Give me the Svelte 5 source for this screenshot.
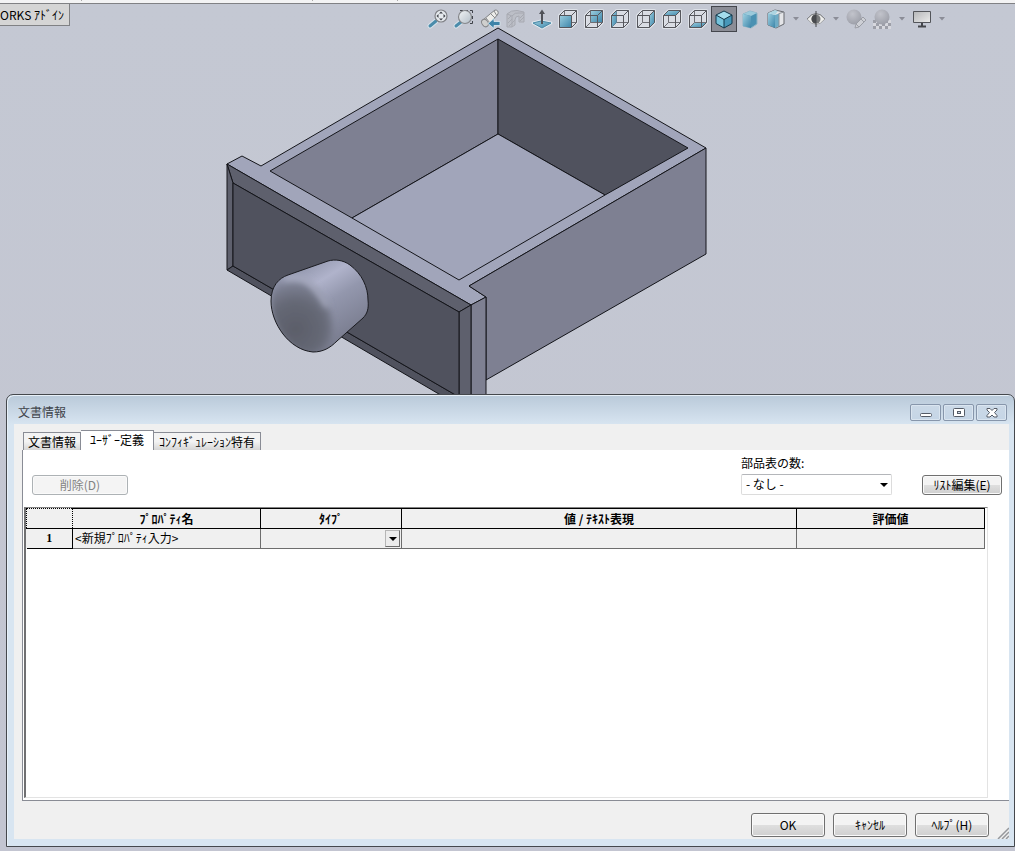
<script lang="ts">
  type Tool = { id: string; label: string; menu?: boolean; disabled?: boolean };

  const tools: Tool[] = [
    { id: 'fit', label: 'ウィンドウにフィット' },
    { id: 'area', label: '一部拡大' },
    { id: 'previous', label: '前の表示' },
    { id: 'section', label: '断面表示', disabled: true },
    { id: 'normal', label: '選択アイテムに垂直' },
    { id: 'front', label: '正面' },
    { id: 'back', label: '背面' },
    { id: 'left', label: '左側面' },
    { id: 'right', label: '右側面' },
    { id: 'top', label: '平面' },
    { id: 'bottom', label: '底面' },
    { id: 'iso', label: '等角投影' },
    { id: 'shaded', label: 'シェイディング' },
    { id: 'style', label: '表示スタイル', menu: true },
    { id: 'visibility', label: 'アイテムを表示/非表示', menu: true },
    { id: 'appearance', label: '外観編集', disabled: true },
    { id: 'scene', label: 'シーン適用', menu: true, disabled: true },
    { id: 'screen', label: '表示設定', menu: true }
  ];

  // filled face of each wireframe cube
  const faces: Record<string, string> = {
    front: '4.5,9.5 16.5,9.5 16.5,21.5 4.5,21.5',
    back: '9.5,4.5 21.5,4.5 21.5,16.5 9.5,16.5',
    left: '4.5,9.5 9.5,4.5 9.5,16.5 4.5,21.5',
    right: '16.5,9.5 21.5,4.5 21.5,16.5 16.5,21.5',
    top: '4.5,9.5 9.5,4.5 21.5,4.5 16.5,9.5',
    bottom: '4.5,21.5 9.5,16.5 21.5,16.5 16.5,21.5'
  };

  const tabs = ['文書情報', 'ﾕｰｻﾞｰ定義', 'ｺﾝﾌｨｷﾞｭﾚｰｼｮﾝ特有'];
  let activeTab = $state(1);
  let activeView = $state('iso');
</script>

<div class="app">
  <div class="ribbon-edge"><i></i><i></i><i></i></div>

  <main class="scene">
    <button class="addin-tab">ORKS ｱﾄﾞｲﾝ</button>

    <div class="toolbar" role="toolbar" aria-label="表示">
      {#each tools as tool}
        <button
          class="tool"
          class:active={activeView === tool.id}
          class:faded={tool.disabled}
          aria-label={tool.label}
          onclick={() => (activeView = tool.id)}
        >
          <svg width="26" height="26" viewBox="0 0 26 26" aria-hidden="true">
            {#if faces[tool.id]}
              <path d="M4.5 9.5l5-5h12v12l-5 5h-12z" fill="#d9dce3" stroke="#dde1e8" stroke-width="3" stroke-linejoin="round" />
              {#if tool.id !== 'back' && tool.id !== 'bottom'}
                <path d="M9.5 4.5v12h12M9.500 16.500l-5 5" fill="none" stroke="#6d6e74" />
              {/if}
              <polygon points={faces[tool.id]} fill="url(#blue)" />
              {#if tool.id === 'back' || tool.id === 'bottom'}
                <path d="M9.5 4.5v12h12M9.500 16.500l-5 5" fill="none" stroke="#6d6e74" />
              {/if}
              <path d="M4.5 9.5h12v12h-12zM4.500 9.500l5-5h12v12l-5 5M16.500 9.500l5-5" fill="none" stroke="#55565c" />
            {:else if tool.id === 'fit'}
              <path d="M11 15l-6 5" stroke="#d9e4ec" stroke-width="5" stroke-linecap="round" />
              <path d="M11 15l-6 5" stroke="#4b8cab" stroke-width="3" stroke-linecap="round" />
              <circle cx="16" cy="10" r="6" fill="#e6eaee" stroke="#808287" stroke-width="1.2" />
              <path d="M16 5.5l2 2h-4zM16 14.5l2-2h-4zM11.500 10l2-2v4zM20.500 10l-2-2v4z" fill="#3e4148" />
            {:else if tool.id === 'area'}
              <path d="M9 4.500h3M14 4.500h3M19 4.500h2.500V7M21.500 10v3M21.500 15v2.500H19" fill="none" stroke="#3f4249" />
              <path d="M10 16l-5 4" stroke="#d9e4ec" stroke-width="5" stroke-linecap="round" />
              <path d="M10 16l-5 4" stroke="#4b8cab" stroke-width="3" stroke-linecap="round" />
              <circle cx="14" cy="11" r="6.500" fill="url(#lens)" stroke="#85878b" stroke-width="1.2" />
            {:else if tool.id === 'previous'}
              <path d="M6 14l7-6 5-4q4 0 3 4l-5 6-7 6q-5 1-3-6z" fill="#ecece9" stroke="#808285" />
              <path d="M17 5l3 5M14 8l4 4M9 12l4 5" stroke="#88898c" />
              <ellipse cx="8" cy="17" rx="3" ry="4" fill="#cfcfce" stroke="#88898c" transform="rotate(-35 8 17)" />
              <path d="M11 17.500l6-5v3h6v4h-6v3z" fill="#3d83a8" stroke="#dbe8f0" stroke-width=".8" />
            {:else if tool.id === 'section'}
              <path d="M4 8q4-4 10-3.500l7 1.500v10h-5v-6q-4 0-4 4v5l-3 2H4z" fill="#bbbdc5" stroke="#a1a3aa" />
              <path d="M4 8l5 2v11M9 10q3-4 7-3l5 0M5 13l3-3M5 17l4-4M6 20l6-6M17 12l4-4M17 15l4-4" fill="none" stroke="#a1a3aa" />
            {:else if tool.id === 'normal'}
              <path d="M4 17l8-2 10 2-9 5z" fill="url(#blue)" stroke="#dfe8ee" stroke-width="3" stroke-linejoin="round" />
              <path d="M4 17l8-2 10 2-9 5z" fill="url(#blue)" stroke="#4a8aa8" />
              <path d="M13 18V7" stroke="#505258" stroke-width="2" />
              <path d="M10 8l3-4.500L16 8z" fill="#505258" />
            {:else if tool.id === 'iso'}
              <path d="M13 5l8 4-8 4.500L5 9z" fill="#a3dcec" />
              <path d="M5 9l8 4.500V22l-8-4.500z" fill="#74c2db" />
              <path d="M21 9l-8 4.500V22l8-4.500z" fill="#4797b9" />
              <path d="M5 9l8 4.500L21 9M13 13.500V22M13 5l8 4v8.500L13 22l-8-4.500V9z" fill="none" stroke="#12394c" stroke-linejoin="round" />
            {:else if tool.id === 'shaded'}
              <path d="M6 8l7-3 7 2v11l-6 4-8-2z" fill="#4a91b2" stroke="#8fb4c5" stroke-linejoin="round" />
              <path d="M6 8l7-3 7 2-6 3z" fill="#9ccadb" />
              <path d="M6 8l8 2v12l-8-2z" fill="url(#blue)" />
            {:else if tool.id === 'style'}
              <path d="M5 7l7-3 9 2v12l-8 4-8-3z" fill="#e4e5e8" stroke="#66696f" stroke-linejoin="round" />
              <path d="M5 7l7 2v13l-7-3z" fill="url(#blue)" />
              <path d="M12 9l4-1.500V20l-4 2z" fill="#6eabc5" />
              <path d="M5 7l7-3 3 1-3 4z" fill="#add5e2" />
              <path d="M16 7.500l5-1.500M16 7.500V20" stroke="#8d9298" />
            {:else if tool.id === 'visibility'}
              <path d="M4 13q9-11 18 0-9 11-18 0z" fill="#eeeeec" stroke="#a0a2a6" />
              <path d="M4 13q9-11 18 0" fill="none" stroke="#808286" />
              <circle cx="13" cy="13" r="4.500" fill="#77797a" />
              <path d="M13 8.500a4.500 4.500 0 0 0 0 9z" fill="#494b4e" />
              <path d="M13 5v16" stroke="#44464a" />
            {:else if tool.id === 'appearance'}
              <circle cx="11" cy="11" r="7.500" fill="url(#ball)" />
              <path d="M12 22l1-4 7-7 3 3-7 7z" fill="#d0d1d6" stroke="#92949b" />
              <path d="M13 18l3 3M18 13l3 3" stroke="#92949b" />
            {:else if tool.id === 'scene'}
              <path d="M4 14h18v9H4z" fill="#dcdde1" />
              <path d="M4 14h3v3H4zM10 14h3v3h-3zM16 14h3v3h-3zM7 17h3v3H7zM13 17h3v3h-3zM19 17h3v3h-3zM4 20h3v3H4zM10 20h3v3h-3zM16 20h3v3h-3z" fill="#94969e" />
              <circle cx="13" cy="11" r="7.500" fill="url(#ball)" />
            {:else if tool.id === 'screen'}
              <path d="M4.500 5.500h17v11h-17z" fill="url(#screen)" stroke="#53555a" />
              <path d="M13 17v4M9 20.500h8" stroke="#44464b" stroke-width="2" />
            {/if}
          </svg>
        </button>
        {#if tool.menu}
          <button class="tool-menu" aria-label="{tool.label} メニュー">
            <svg width="6" height="4" viewBox="0 0 6 4" aria-hidden="true"><path d="M0 0h6L3 3.500z" fill="#8b8d97" /></svg>
          </button>
        {/if}
      {/each}
    </div>

    <svg class="model" width="482" height="368" viewBox="226 27 482 368" role="img" aria-label="引き出し">
      <defs>
        <linearGradient id="blue" x1="0" y1="0" x2="1" y2="1">
          <stop offset="0" stop-color="#9dcfe0" />
          <stop offset="1" stop-color="#3c85a9" />
        </linearGradient>
        <linearGradient id="lens" x1="0" y1="0" x2="1" y2="1">
          <stop offset="0" stop-color="#f2f4f5" />
          <stop offset="1" stop-color="#b3bec8" />
        </linearGradient>
        <linearGradient id="screen" x1="0" y1="0" x2="1" y2="1">
          <stop offset="0" stop-color="#b5b6b8" />
          <stop offset="1" stop-color="#ececec" />
        </linearGradient>
        <radialGradient id="ball" cx=".4" cy=".3" r=".7">
          <stop offset="0" stop-color="#c2c3ca" />
          <stop offset="1" stop-color="#9597a0" />
        </radialGradient>
        <linearGradient id="knob-side" gradientUnits="userSpaceOnUse" x1="304" y1="265" x2="350" y2="340">
          <stop offset="0" stop-color="#9297ad" />
          <stop offset=".25" stop-color="#b0b3cb" />
          <stop offset=".5" stop-color="#9397ad" />
          <stop offset="1" stop-color="#777a8c" />
        </linearGradient>
        <radialGradient id="knob-face" gradientUnits="userSpaceOnUse" cx="290" cy="325" r="54">
          <stop offset="0" stop-color="#5b5e69" />
          <stop offset=".5" stop-color="#656875" />
          <stop offset=".8" stop-color="#7a7e90" />
          <stop offset="1" stop-color="#989cb3" />
        </radialGradient>
        <filter id="soft" x="-20%" y="-20%" width="140%" height="140%"><feGaussianBlur stdDeviation="3" /></filter>
        <clipPath id="knob-clip">
          <path d="M271 301C271 286 279 278 288 275L328 261C335 259 343 260 350 265C362 274 368 287 368 300C369 309 367 314 363 318L337 341C330 348 323 352 313 352C289 350 271 323 271 301z" />
        </clipPath>
      </defs>
      <g stroke="#14151a" stroke-linejoin="round">
        <path d="M227 164L242 156 261 166 498 28 706 148 469 286 486 297 471 305z" fill="#a1a5ba" />
        <path d="M270 171L498 39V134L352 218z" fill="#7e8092" />
        <path d="M498 39L688 148 605 195 498 134z" fill="#50525e" />
        <path d="M352 218L498 134 605 195 459 280z" fill="#a1a5ba" />
        <path d="M706 148V254L486 380V297L469 286z" fill="#7e8092" />
        <path d="M471 305L486 297V397H471z" fill="#7e8092" />
        <path d="M227 164L471 305 459 312 233 183z" fill="#5e606d" />
        <path d="M227 164L233 183V266L227 270z" fill="#5e606d" />
        <path d="M471 305V397H459V312z" fill="#5e606d" />
        <path d="M227 270L233 266 459 397H444z" fill="#50525e" />
        <path d="M233 183L459 312V397L233 266z" fill="#50525e" />
      </g>
      <g clip-path="url(#knob-clip)">
        <path d="M265 250H375V360H265z" fill="url(#knob-side)" />
        <ellipse cx="301" cy="315" rx="28" ry="42" fill="url(#knob-face)" transform="rotate(-27 301 315)" filter="url(#soft)" />
        <path d="M284 279Q302 275 312 286T327 307" fill="none" stroke="#b2b6cb" stroke-width="4" filter="url(#soft)" />
      </g>
      <path d="M271 301C271 286 279 278 288 275L328 261C335 259 343 260 350 265C362 274 368 287 368 300C369 309 367 314 363 318L337 341C330 348 323 352 313 352C289 350 271 323 271 301z" fill="none" stroke="#1a1b20" />
    </svg>
  </main>

  <section class="dialog" role="dialog" aria-labelledby="dialog-title">
    <header class="titlebar">
      <h1 id="dialog-title">文書情報</h1>
      <div class="window-buttons">
        <button aria-label="最小化">
          <svg width="12" height="10" viewBox="0 0 12 10"><rect x=".5" y="5.500" width="11" height="3" rx="1" fill="#fff" stroke="#545b66" /></svg>
        </button>
        <button aria-label="最大化">
          <svg width="12" height="10" viewBox="0 0 12 10"><rect x=".5" y=".5" width="11" height="8" rx="1" fill="#fff" stroke="#545b66" /><rect x="4.500" y="3.500" width="3" height="2" fill="#cfdae8" stroke="#545b66" /></svg>
        </button>
        <button aria-label="閉じる">
          <svg width="12" height="10" viewBox="0 0 12 10"><path d="M1 .5h3l2 2 2-2h3v1.500L8.500 4.500 11 7.500V9H8L6 7 4 9H1V7.500L3.500 4.500 1 2z" fill="#fff" stroke="#545b66" /></svg>
        </button>
      </div>
    </header>

    <div class="dialog-body">
      <div class="tabs" role="tablist">
        {#each tabs as tab, i}
          <button role="tab" aria-selected={activeTab === i} class:selected={activeTab === i} onclick={() => (activeTab = i)}>{tab}</button>
        {/each}
      </div>

      <div class="panel" role="tabpanel">
        <div class="controls">
          <button class="btn delete" disabled>削除(D)</button>
          <div class="bom">
            <label for="bom-quantity">部品表の数:</label>
            <div class="select-box">
              <select id="bom-quantity">
                <option>- なし -</option>
              </select>
              <svg width="8" height="4" viewBox="0 0 8 4" aria-hidden="true"><path d="M0 0h8L4 4z" /></svg>
            </div>
          </div>
          <button class="btn edit-list">ﾘｽﾄ編集(E)</button>
        </div>

        <div class="grid-box">
          <table>
            <colgroup>
              <col class="col-index" />
              <col class="col-name" />
              <col class="col-type" />
              <col />
              <col class="col-result" />
            </colgroup>
            <thead>
              <tr>
                <td class="corner"></td>
                <th scope="col">ﾌﾟﾛﾊﾟﾃｨ名</th>
                <th scope="col">ﾀｲﾌﾟ</th>
                <th scope="col">値 / ﾃｷｽﾄ表現</th>
                <th scope="col">評価値</th>
              </tr>
            </thead>
            <tbody>
              <tr>
                <th scope="row">1</th>
                <td>&lt;新規ﾌﾟﾛﾊﾟﾃｨ入力&gt;</td>
                <td class="type-cell">
                  <select aria-label="ﾀｲﾌﾟ"><option></option></select>
                  <span class="drop"><svg width="8" height="4" viewBox="0 0 8 4" aria-hidden="true"><path d="M0 0h8L4 4z" /></svg></span>
                </td>
                <td></td>
                <td></td>
              </tr>
            </tbody>
          </table>
        </div>
      </div>

      <footer>
        <button class="btn">OK</button>
        <button class="btn">ｷｬﾝｾﾙ</button>
        <button class="btn">ﾍﾙﾌﾟ(H)</button>
        <svg class="grip" width="12" height="12" viewBox="0 0 12 12" aria-hidden="true">
          <path d="M1 12L12 1M5 12l7-7M9 12l3-3" stroke="#96989c" stroke-width="1.500" />
        </svg>
      </footer>
    </div>
  </section>
</div>

<style>
  :global(body) {
    background: #c4c7d3;
  }

  .app,
  .app button,
  .app select {
    font-family: "Noto Sans CJK JP", "Liberation Sans", sans-serif;
    font-size: 12px;
    line-height: 16px;
    color: #000;
  }

  .app {
    box-sizing: border-box;
    min-height: 100vh;
    padding-bottom: 4px;
    display: flex;
    flex-direction: column;
    background: linear-gradient(#c4c8d3, #c3c5d1);
  }

  .app button {
    box-sizing: border-box;
    padding: 0;
    white-space: nowrap;
  }

  svg {
    flex: none;
  }

  .ribbon-edge {
    height: 3px;
    background: #f3f3f4;
    border-bottom: 1px solid #808184;
    display: flex;
    gap: 84px;
    padding-left: 81px;
  }

  .ribbon-edge i {
    width: 1px;
    height: 1px;
    background: #aaa;
  }

  .ribbon-edge i:nth-child(2) {
    margin-left: 146px;
  }

  .scene {
    height: 390px;
    overflow: hidden;
    display: grid;
    grid-template-columns: 70px 1fr;
    grid-template-rows: 22px 1fr;
  }

  .addin-tab {
    grid-area: 1 / 1;
    border: solid #808184;
    border-width: 0 1px 1px 0;
    background: #d5d5d5;
    text-align: left;
    overflow: hidden;
  }

  .toolbar {
    grid-area: 1 / 2 / 3 / 3;
    z-index: 1;
    align-self: start;
    display: flex;
    margin: 2px 0 0 355px;
  }

  .tool,
  .tool-menu {
    border: 0;
    background: none;
    height: 26px;
    display: flex;
    align-items: center;
    justify-content: center;
  }

  .tool {
    width: 26px;
  }

  .tool-menu {
    width: 14px;
  }

  .tool.faded {
    opacity: 0.8;
  }

  .tool.active {
    background: #8b8d96;
    border: 1px solid #44464d;
  }

  .model {
    grid-area: 1 / 1 / 3 / 3;
    margin: 23px 0 0 226px;
  }

  .dialog {
    flex: 1;
    display: flex;
    flex-direction: column;
    margin-left: 6px;
    border: 1px solid #45484d;
    border-radius: 7px 7px 0 0;
    background: linear-gradient(#b9c9d9, #d8e5f1 30px);
    box-shadow: inset 1px 1px 0 #e8f0f8;
    padding: 0 5px 7px 7px;
  }

  .titlebar {
    height: 29px;
    display: flex;
    align-items: flex-start;
    justify-content: space-between;
    padding-left: 4px;
  }

  .titlebar h1 {
    margin: 9px 0 0;
    font-size: 12px;
    font-weight: 400;
    color: #3f444b;
  }

  .window-buttons {
    display: flex;
    gap: 2px;
    margin: 9px 2px 0 0;
  }

  .window-buttons button {
    width: 31px;
    height: 17px;
    border: 1px solid #8796ab;
    border-radius: 2px;
    background: linear-gradient(#cbd9e7, #c5d5e6);
    box-shadow: inset 0 0 0 1px #dae5f0;
    display: flex;
    align-items: center;
    justify-content: center;
  }

  .dialog-body {
    flex: 1;
    display: flex;
    flex-direction: column;
    background: #f0f0f0;
    padding-top: 6px;
  }

  .tabs {
    display: flex;
    align-items: flex-end;
    height: 20px;
    padding-left: 9px;
  }

  .app .tabs button {
    height: 18px;
    padding: 0 5px;
    border: 1px solid #898c95;
    border-width: 1px 1px 0 0;
    background: linear-gradient(#f3f3f3 50%, #d5d5d5);
  }

  .app .tabs button:first-child {
    padding: 0 4px;
    border-left-width: 1px;
  }

  .app .tabs button.selected {
    height: 20px;
    padding: 0 9px 2px;
    background: #fff;
  }

  .panel {
    flex: 1;
    display: flex;
    flex-direction: column;
    margin-left: 8px;
    border-left: 1px solid #898c95;
    border-bottom: 1px solid #898c95;
    background: #fff;
    padding: 5px 0 2px 1px;
  }

  .controls {
    display: flex;
    align-items: flex-end;
    padding: 0 7px 12px 8px;
  }

  .btn {
    width: 74px;
    height: 24px;
    border: 1px solid #707070;
    border-radius: 3px;
    background: linear-gradient(#f3f3f3 50%, #dfdfdf 50%, #cfcfcf);
    box-shadow: inset 0 0 0 1px #fafafa;
  }

  .app .btn.delete {
    width: 96px;
    height: 20px;
    margin-right: auto;
    border-color: #adb2b5;
    background: #f4f4f4;
    color: #838383;
  }

  .btn.edit-list {
    width: 80px;
    height: 20px;
  }

  .bom {
    width: 151px;
    margin-right: 30px;
  }

  .bom label {
    display: block;
    margin-bottom: 3px;
  }

  .select-box {
    position: relative;
  }

  .select-box select {
    display: block;
    box-sizing: border-box;
    width: 100%;
    height: 21px;
    padding: 0 4px 2px;
    border: 1px solid #dcdcdc;
    border-top-color: #b4b6ba;
    border-radius: 2px;
    background: #fff;
    appearance: none;
  }

  .select-box svg {
    position: absolute;
    right: 4px;
    top: 9px;
    pointer-events: none;
  }

  .grid-box {
    flex: 1;
    margin-right: 21px;
    border: 1px solid #e3e3e3;
    border-top: 1px solid #828282;
    border-left: 2px solid #707072;
  }

  table {
    width: calc(100% - 2px);
    table-layout: fixed;
    border-collapse: collapse;
    background: #f0f0f0;
  }

  .col-index {
    width: 46px;
  }

  .col-name,
  .col-result {
    width: 188px;
  }

  .col-type {
    width: 141px;
  }

  th,
  td {
    height: 19px;
    padding: 0;
    border: 1px solid #6d6d6d;
    border-left: 0;
    line-height: 18px;
    white-space: nowrap;
  }

  td {
    padding-left: 2px;
    vertical-align: top;
  }

  thead th,
  tbody th {
    border-color: #000;
  }

  tbody th {
    font-family: "Liberation Serif", serif;
    vertical-align: top;
  }

  thead .corner {
    border: 1px dotted #000;
  }

  .type-cell {
    position: relative;
    padding: 0;
  }

  .type-cell select {
    display: block;
    box-sizing: border-box;
    width: 100%;
    height: 19px;
    border: 0;
    background: transparent;
    appearance: none;
  }

  .drop {
    position: absolute;
    top: 1px;
    right: 1px;
    box-sizing: border-box;
    width: 15px;
    height: 17px;
    border: 1px solid #b6b6b6;
    border-right-color: #6d6d6d;
    border-bottom-color: #6d6d6d;
    background: #ececec;
    display: flex;
    align-items: center;
    justify-content: center;
    pointer-events: none;
  }

  footer {
    display: flex;
    justify-content: flex-end;
    gap: 8px;
    padding-top: 12px;
    height: 26px;
  }

  .grip {
    align-self: flex-end;
  }
</style>
